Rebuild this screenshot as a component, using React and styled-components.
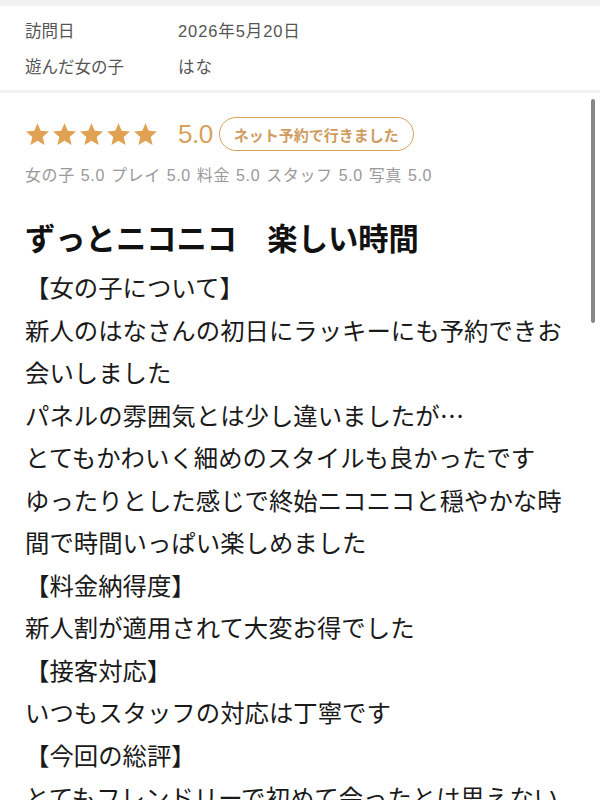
import React from 'react';
import styled, { createGlobalStyle } from 'styled-components';

const GlobalStyle = createGlobalStyle`
  html, body {
    margin: 0;
    padding: 0;
    background: #fff;
  }
  body {
    font-family: "Liberation Sans", "Noto Sans CJK JP", sans-serif;
    color: #222;
    overflow: hidden;
  }
`;

const Page = styled.div`
  position: relative;
  width: 600px;
  height: 800px;
  overflow: hidden;
  background: #fff;
`;

const TopBand = styled.div`
  height: 6px;
  background: #f2f2f2;
`;

const MetaSection = styled.div`
  padding: 6px 25px;
  border-bottom: 3px solid #f2f2f2;
`;

const MetaRow = styled.div`
  display: flex;
  height: 36px;
  align-items: center;
  font-size: 16.5px;
  color: #555;
`;

const MetaLabel = styled.div`
  width: 153px;
  flex-shrink: 0;
`;

const MetaValue = styled.div`
  letter-spacing: 0.9px;
`;

const Review = styled.div`
  padding: 23px 25px 0;
`;

const RatingRow = styled.div`
  display: flex;
  align-items: center;
  height: 36px;
`;

const Stars = styled.div`
  display: flex;
  gap: 2px;
  margin-right: 20px;
`;

const Score = styled.div`
  font-size: 26px;
  color: #d9a15c;
  margin-right: 6px;
  letter-spacing: -0.5px;
`;

const Badge = styled.div`
  display: flex;
  align-items: center;
  height: 32px;
  padding: 0 14px;
  border: 1.5px solid #d9a15c;
  border-radius: 18px;
  font-family: "Noto Sans CJK JP", sans-serif;
  font-size: 15px;
  font-weight: 700;
  color: #cf9c60;
`;

const SubRatings = styled.div`
  margin-top: 12px;
  font-size: 16px;
  line-height: 24px;
  color: #999;
  letter-spacing: 0.6px;
  word-spacing: 1px;
`;

const Title = styled.h2`
  margin: 29px 0 0;
  font-family: "Noto Sans CJK JP", sans-serif;
  font-size: 30.3px;
  line-height: 40px;
  font-weight: 700;
  color: #111;
`;

const Body = styled.div`
  margin-top: 9px;
  width: 550px;
  font-family: "Noto Sans CJK JP", sans-serif;
  font-size: 24.4px;
  line-height: 42.5px;
  color: #1a1a1a;
`;

const Para = styled.div``;

const ScrollIndicator = styled.div`
  position: absolute;
  top: 99px;
  right: 5px;
  width: 4px;
  height: 224px;
  border-radius: 2px;
  background: #888;
`;

function Star() {
  return (
    <svg width="25" height="25" viewBox="0 0 24 24">
      <polygon
        points="12,1.2 15.1,8.4 23,9.1 17,14.3 18.8,22 12,18 5.2,22 7,14.3 1,9.1 8.9,8.4"
        fill="#e0a152"
      />
    </svg>
  );
}

const meta = [
  ['訪問日', '2026年5月20日'],
  ['遊んだ女の子', 'はな'],
];

const lines = [
  '【女の子について】',
  '新人のはなさんの初日にラッキーにも予約できお会いしました',
  'パネルの雰囲気とは少し違いましたが…',
  'とてもかわいく細めのスタイルも良かったです',
  'ゆったりとした感じで終始ニコニコと穏やかな時間で時間いっぱい楽しめました',
  '【料金納得度】',
  '新人割が適用されて大変お得でした',
  '【接客対応】',
  'いつもスタッフの対応は丁寧です',
  '【今回の総評】',
  'とてもフレンドリーで初めて会ったとは思えない',
];

export default function App() {
  return (
    <Page>
      <GlobalStyle />
      <TopBand />
      <MetaSection>
        {meta.map(([label, value]) => (
          <MetaRow key={label}>
            <MetaLabel>{label}</MetaLabel>
            <MetaValue>{value}</MetaValue>
          </MetaRow>
        ))}
      </MetaSection>
      <Review>
        <RatingRow>
          <Stars>
            {[0, 1, 2, 3, 4].map((i) => (
              <Star key={i} />
            ))}
          </Stars>
          <Score>5.0</Score>
          <Badge>ネット予約で行きました</Badge>
        </RatingRow>
        <SubRatings>女の子 5.0 プレイ 5.0 料金 5.0 スタッフ 5.0 写真 5.0</SubRatings>
        <Title>ずっとニコニコ　楽しい時間</Title>
        <Body>
          {lines.map((t, i) => (
            <Para key={i}>{t}</Para>
          ))}
        </Body>
      </Review>
      <ScrollIndicator />
    </Page>
  );
}
